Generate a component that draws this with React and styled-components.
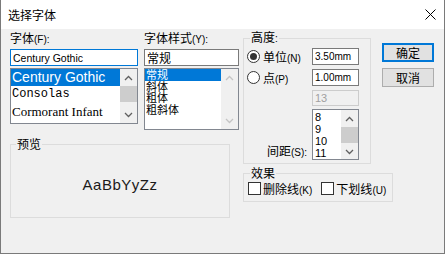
import styled, { createGlobalStyle } from 'styled-components';

const GlobalStyle = createGlobalStyle`
  html, body {
    margin: 0;
    padding: 0;
    background: #fff;
  }

  body {
    font-family: 'Noto Sans CJK SC', 'Noto Sans', sans-serif;
    font-size: 12px;
    color: #000;
  }

  * {
    box-sizing: border-box;
  }
`;

const Window = styled.div`
  width: 445px;
  height: 254px;
  display: flex;
  flex-direction: column;
  border: 1px solid #7a7a7a;
  border-top: none;
  background: #f0f0f0;
`;

const TitleBar = styled.div`
  height: 29px;
  flex: none;
  display: flex;
  align-items: center;
  justify-content: space-between;
  padding: 0 8px 0 7px;
  background: #fff;
  line-height: 16px;
`;

const Body = styled.div`
  flex: 1;
  display: flex;
  align-items: flex-start;
  padding: 1px 0 0 9px;
`;

const LeftColumn = styled.div`
  width: 229px;
  flex: none;
  display: flex;
  flex-direction: column;
`;

const PickerRow = styled.div`
  display: flex;
  gap: 6px;
  align-items: flex-start;
`;

const Picker = styled.div`
  width: ${(p) => p.$width}px;
  display: flex;
  flex-direction: column;
`;

const FieldLabel = styled.div`
  height: 16px;
  line-height: 16px;
  margin-bottom: 3px;
  white-space: nowrap;
`;

const Latin = styled.span`
  font-family: 'Liberation Sans', Arial, sans-serif;
  font-size: ${(p) => p.$size || 10}px;
`;

const TextBox = styled.div`
  height: ${(p) => p.$height || 17}px;
  display: flex;
  align-items: center;
  padding: 0 2px;
  border: 1px solid ${(p) => (p.$focused ? '#0078d7' : p.$disabled ? '#cccccc' : '#7a7a7a')};
  background: ${(p) => (p.$disabled ? '#f0f0f0' : '#fff')};
  color: ${(p) => (p.$disabled ? '#a0a0a0' : '#000')};
  white-space: nowrap;
  overflow: hidden;
`;

const ListBox = styled.div`
  height: ${(p) => p.$height}px;
  margin-top: ${(p) => p.$gap ?? 2}px;
  display: flex;
  border: 1px solid #828790;
  background: #fff;
`;

const ListItems = styled.div`
  flex: 1;
  min-width: 0;
  overflow: hidden;
  padding-top: ${(p) => p.$padTop || 0}px;
`;

const ListItem = styled.div`
  height: ${(p) => p.$row}px;
  line-height: ${(p) => p.$row}px;
  padding-left: ${(p) => p.$indent ?? 1}px;
  white-space: nowrap;
  font-family: ${(p) => p.$font || 'inherit'};
  font-size: ${(p) => (p.$size ? `${p.$size}px` : 'inherit')};
  background: ${(p) => (p.$selected ? '#0078d7' : 'transparent')};
  color: ${(p) => (p.$selected ? '#fff' : '#000')};
`;

const ScrollTrack = styled.div`
  width: 17px;
  flex: none;
  display: flex;
  flex-direction: column;
  background: #f0f0f0;
`;

const ArrowCell = styled.div`
  height: 17px;
  flex: none;
  display: flex;
  align-items: center;
  justify-content: center;
`;

const Thumb = styled.div`
  height: 16px;
  flex: none;
  background: #cdcdcd;
`;

const TrackGap = styled.div`
  flex: 1;
`;

const GroupBox = styled.fieldset`
  margin: ${(p) => p.$top || 0}px 0 0 0;
  padding: ${(p) => p.$pad};
  width: ${(p) => p.$width}px;
  height: ${(p) => p.$height}px;
  min-width: 0;
  flex: none;
  border: 1px solid #dcdcdc;
`;

const GroupLegend = styled.legend`
  margin-left: ${(p) => p.$offset}px;
  padding: 0 1px;
  line-height: 14px;
  font-size: 12px;
`;

const PreviewArea = styled.div`
  height: 66px;
  display: flex;
  align-items: center;
  justify-content: center;
`;

const PreviewText = styled.span`
  font-family: 'Liberation Sans', Arial, sans-serif;
  font-size: 15px;
  letter-spacing: 0.5px;
  color: #1a1a1a;
`;

const MiddleColumn = styled.div`
  width: 128px;
  flex: none;
  margin-left: 4px;
  display: flex;
  flex-direction: column;
  align-items: flex-start;
`;

const HeightGrid = styled.div`
  display: grid;
  grid-template-columns: 1fr 47px;
  row-gap: 4px;
  align-items: center;
`;

const RadioOption = styled.label`
  display: flex;
  align-items: center;
  gap: 3px;
  white-space: nowrap;
`;

const RadioMark = styled.span`
  width: 13px;
  height: 13px;
  flex: none;
  display: flex;
  align-items: center;
  justify-content: center;
  border: 1px solid #333;
  border-radius: 50%;
  background: #fff;

  &::after {
    content: '';
    width: 7px;
    height: 7px;
    border-radius: 50%;
    background: ${(p) => (p.$checked ? '#333' : 'transparent')};
  }
`;

const SpacingLabel = styled.div`
  justify-self: end;
  align-self: end;
  padding-right: 5px;
  line-height: 14px;
  white-space: nowrap;
`;

const CheckRow = styled.div`
  height: 16px;
  display: flex;
  align-items: center;
  gap: 9px;
`;

const CheckOption = styled.label`
  display: flex;
  align-items: center;
  gap: 2px;
  white-space: nowrap;
`;

const CheckMark = styled.span`
  width: 13px;
  height: 13px;
  flex: none;
  border: 1px solid #333;
  background: #fff;
`;

const ButtonColumn = styled.div`
  width: 52px;
  flex: none;
  margin: 13px 0 0 11px;
  display: flex;
  flex-direction: column;
  gap: 6px;
`;

const DialogButton = styled.button`
  height: 19px;
  padding: 0;
  font-family: inherit;
  font-size: 12px;
  line-height: 15px;
  color: #000;
  background: #e1e1e1;
  border: 1px solid ${(p) => (p.$default ? '#0078d7' : '#adadad')};
  box-shadow: ${(p) => (p.$default ? 'inset 0 0 0 1px #0078d7' : 'none')};
`;

function Chevron({ dir, disabled }) {
  return (
    <svg width='9' height='6' viewBox='0 0 9 6'>
      <polyline
        points={dir === 'up' ? '1,5 4.5,1.5 8,5' : '1,1 4.5,4.5 8,1'}
        fill='none'
        stroke={disabled ? '#c4c4c4' : '#606060'}
        strokeWidth='1.3'
      />
    </svg>
  );
}

function ScrollBar({ disabled }) {
  return (
    <ScrollTrack>
      <ArrowCell>
        <Chevron dir='up' disabled={disabled} />
      </ArrowCell>
      {!disabled && <Thumb />}
      <TrackGap />
      <ArrowCell>
        <Chevron dir='down' disabled={disabled} />
      </ArrowCell>
    </ScrollTrack>
  );
}

function CloseIcon() {
  return (
    <svg width='11' height='11' viewBox='0 0 11 11'>
      <path d='M0.5 0.5 L10.5 10.5 M10.5 0.5 L0.5 10.5' stroke='#000' strokeWidth='1' />
    </svg>
  );
}

const fontNames = [
  { name: 'Century Gothic', font: "'Liberation Sans', Arial, sans-serif", size: 14 },
  { name: 'Consolas', font: "'Liberation Mono', monospace", size: 12 },
  { name: 'Cormorant Infant', font: "'Liberation Serif', serif", size: 13 },
];

const styleNames = ['常规', '斜体', '粗体', '粗斜体'];
const spacings = ['8', '9', '10', '11'];

export default function App() {
  return (
    <>
      <GlobalStyle />
      <Window>
        <TitleBar>
          <span>选择字体</span>
          <CloseIcon />
        </TitleBar>
        <Body>
          <LeftColumn>
            <PickerRow>
              <Picker $width={128}>
                <FieldLabel>
                  字体<Latin>(F):</Latin>
                </FieldLabel>
                <TextBox $focused>
                  <Latin $size={10.5}>Century Gothic</Latin>
                </TextBox>
                <ListBox $height={56}>
                  <ListItems>
                    {fontNames.map((f, i) => (
                      <ListItem key={f.name} $row={17} $font={f.font} $size={f.size} $selected={i === 0}>
                        {f.name}
                      </ListItem>
                    ))}
                  </ListItems>
                  <ScrollBar />
                </ListBox>
              </Picker>
              <Picker $width={95}>
                <FieldLabel>
                  字体样式<Latin>(Y):</Latin>
                </FieldLabel>
                <TextBox>常规</TextBox>
                <ListBox $height={62}>
                  <ListItems>
                    {styleNames.map((s, i) => (
                      <ListItem key={s} $row={11.5} $size={11} $selected={i === 0}>
                        {s}
                      </ListItem>
                    ))}
                  </ListItems>
                  <ScrollBar disabled />
                </ListBox>
              </Picker>
            </PickerRow>
            <GroupBox $top={7} $width={220} $height={81} $pad='0'>
              <GroupLegend $offset={5}>预览</GroupLegend>
              <PreviewArea>
                <PreviewText>AaBbYyZz</PreviewText>
              </PreviewArea>
            </GroupBox>
          </LeftColumn>

          <MiddleColumn>
            <GroupBox $width={128} $height={134} $pad='2px 11px 0 3px'>
              <GroupLegend $offset={3}>
                高度<Latin>:</Latin>
              </GroupLegend>
              <HeightGrid>
                <RadioOption>
                  <RadioMark $checked />
                  <span>
                    单位<Latin>(N)</Latin>
                  </span>
                </RadioOption>
                <TextBox>
                  <Latin>3.50mm</Latin>
                </TextBox>
                <RadioOption>
                  <RadioMark />
                  <span>
                    点<Latin>(P)</Latin>
                  </span>
                </RadioOption>
                <TextBox>
                  <Latin>1.00mm</Latin>
                </TextBox>
                <span />
                <TextBox $disabled $height={16}>
                  <Latin $size={11}>13</Latin>
                </TextBox>
                <SpacingLabel>
                  间距<Latin>(S):</Latin>
                </SpacingLabel>
                <ListBox $height={51} $gap={-1}>
                  <ListItems $padTop={1}>
                    {spacings.map((s) => (
                      <ListItem key={s} $row={12} $indent={2} $font="'Liberation Sans', Arial, sans-serif" $size={11}>
                        {s}
                      </ListItem>
                    ))}
                  </ListItems>
                  <ScrollBar />
                </ListBox>
              </HeightGrid>
            </GroupBox>
            <GroupBox $top={2} $width={150} $height={36} $pad='0 4px'>
              <GroupLegend $offset={2}>效果</GroupLegend>
              <CheckRow>
                <CheckOption>
                  <CheckMark />
                  <span>
                    删除线<Latin>(K)</Latin>
                  </span>
                </CheckOption>
                <CheckOption>
                  <CheckMark />
                  <span>
                    下划线<Latin>(U)</Latin>
                  </span>
                </CheckOption>
              </CheckRow>
            </GroupBox>
          </MiddleColumn>

          <ButtonColumn>
            <DialogButton $default>确定</DialogButton>
            <DialogButton>取消</DialogButton>
          </ButtonColumn>
        </Body>
      </Window>
    </>
  );
}
